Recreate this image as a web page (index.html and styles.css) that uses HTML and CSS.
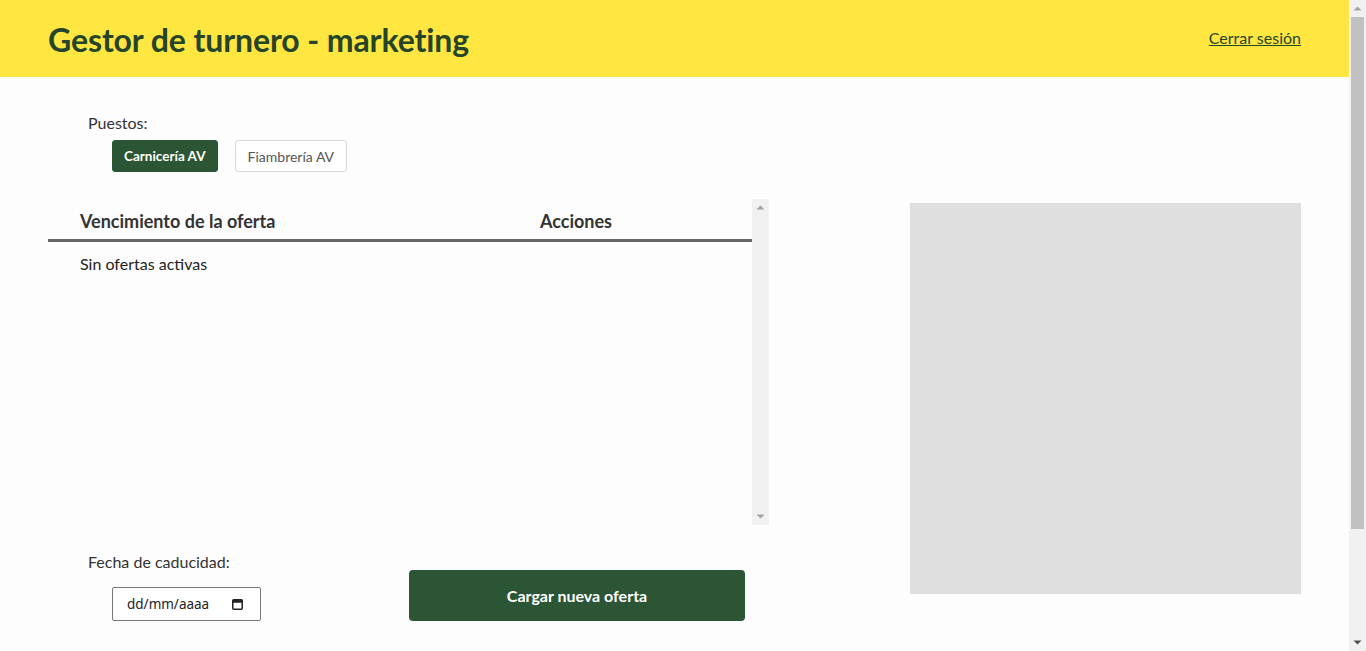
FILE: index.html
```html
<!DOCTYPE html>
<html lang="es">
<head>
<meta charset="utf-8">
<title>Gestor de turnero - marketing</title>
<link rel="stylesheet" href="styles.css">
</head>
<body>
<div class="page">
  <header class="topbar">
    <h1 class="title">Gestor de turnero - marketing</h1>
    <a class="logout" href="#">Cerrar sesión</a>
  </header>
  <main class="content">
    <section class="left">
      <div class="puestos">
        <div class="label">Puestos:</div>
        <div class="puesto-buttons">
          <button class="btn-puesto active">Carnicería AV</button>
          <button class="btn-puesto">Fiambrería AV</button>
        </div>
      </div>
      <div class="table-wrap">
        <div class="table-scroll">
          <table class="offers">
            <thead>
              <tr><th class="col-venc">Vencimiento de la oferta</th><th class="col-acc">Acciones</th></tr>
            </thead>
            <tbody>
              <tr><td class="empty" colspan="2">Sin ofertas activas</td></tr>
            </tbody>
          </table>
        </div>
        <div class="sbar" aria-hidden="true">
          <div class="sbar-btn">
            <svg width="17" height="17" viewBox="0 0 17 17"><path d="M4.5 10.5h8L8.5 6.5z" fill="#a3a3a3"/></svg>
          </div>
          <div class="sbar-track"></div>
          <div class="sbar-btn">
            <svg width="17" height="17" viewBox="0 0 17 17"><path d="M4.5 6.5h8L8.5 10.5z" fill="#a3a3a3"/></svg>
          </div>
        </div>
      </div>
      <div class="form-row">
        <div class="date-field">
          <div class="label">Fecha de caducidad:</div>
          <label class="date-box">
            <input class="date-input" type="text" placeholder="dd/mm/aaaa">
            <svg class="cal-icon" width="11" height="12" viewBox="0 0 11 12" aria-hidden="true">
              <rect x="0.75" y="1.75" width="9.5" height="9.5" rx="1" fill="none" stroke="#222" stroke-width="1.5"/>
              <rect x="0.75" y="1.75" width="9.5" height="3" fill="#222"/>
            </svg>
          </label>
        </div>
        <button class="btn-cargar">Cargar nueva oferta</button>
      </div>
    </section>
    <aside class="preview"></aside>
  </main>
</div>
<div class="page-sbar" aria-hidden="true">
  <div class="sbar-btn">
    <svg width="17" height="17" viewBox="0 0 17 17"><path d="M4.5 10.5h8L8.5 6.5z" fill="#a3a3a3"/></svg>
  </div>
  <div class="sbar-track">
    <div class="sbar-thumb"></div>
  </div>
  <div class="sbar-btn">
    <svg width="17" height="17" viewBox="0 0 17 17"><path d="M4.5 6.5h8L8.5 10.5z" fill="#505050"/></svg>
  </div>
</div>
</body>
</html>
```
FILE: styles.css
```css
html, body {
  margin: 0;
  padding: 0;
}
body {
  background: #fdfdfd;
  font-family: Lato, "Open Sans", sans-serif;
  color: #222;
}
.page {
  margin-right: 17px;
}

/* fake classic scrollbars */
.page-sbar {
  position: fixed;
  top: 0;
  right: 0;
  width: 17px;
  height: 100vh;
  background: #f1f1f1;
  display: flex;
  flex-direction: column;
}
.sbar-btn {
  height: 17px;
  flex: none;
  display: flex;
}
.sbar-track {
  flex: 1;
  display: flex;
  flex-direction: column;
}
.sbar-thumb {
  height: 512px;
  margin: 0 2px;
  background: #c1c1c1;
}
.sbar {
  width: 17px;
  flex: none;
  background: #f1f1f1;
  display: flex;
  flex-direction: column;
}

.topbar {
  height: 77px;
  background: #ffe640;
  display: flex;
  align-items: center;
  justify-content: space-between;
  padding: 0 48px;
  box-sizing: border-box;
}
.title {
  margin: 0;
  font-size: 32px;
  font-weight: 700;
  color: #25442a;
  letter-spacing: -0.1px;
  padding-top: 2px;
}
.logout {
  color: #25442a;
  font-size: 16px;
  text-decoration: underline;
  margin-top: -3px;
}
.content {
  display: flex;
  justify-content: space-between;
  padding: 0 48px 163px;
}
.left {
  width: 721px;
}
.puestos {
  padding-top: 36px;
}
.label {
  font-size: 16px;
  line-height: 20px;
  color: #333;
  padding-left: 40px;
}
.puesto-buttons {
  display: flex;
  gap: 17px;
  padding-left: 64px;
  margin-top: 7px;
}
.btn-puesto {
  height: 32px;
  padding: 0 12px;
  font-family: Lato, sans-serif;
  font-size: 14px;
  border-radius: 3px;
  background: #fff;
  color: #555;
  border: 1px solid #d8d8d8;
}
.btn-puesto.active {
  background: #2b5535;
  color: #fff;
  border-color: #2b5535;
  font-weight: 700;
  padding: 0 11px;
  font-size: 13.5px;
}
.table-wrap {
  margin-top: 27px;
  height: 326px;
  display: flex;
}
.table-scroll {
  flex: 1;
  overflow-y: auto;
}
.offers {
  width: 100%;
  border-collapse: collapse;
}
.offers th {
  font-size: 18px;
  font-weight: 700;
  color: #333;
  height: 36px;
  padding: 4px 0 0;
  border-bottom: 3px solid #666;
  width: 50%;
}
.col-venc {
  text-align: left;
  padding-left: 32px !important;
}
.col-acc {
  text-align: center;
}
.empty {
  font-size: 16px;
  padding: 12px 0 0 32px;
  color: #222;
}
.form-row {
  display: flex;
  align-items: flex-start;
  margin-top: 27px;
}
.date-field {
  width: 361px;
}
.date-box {
  margin: 15px 0 0 64px;
  width: 149px;
  height: 34px;
  box-sizing: border-box;
  border: 1px solid #767676;
  border-radius: 2px;
  background: #fff;
  display: flex;
  align-items: center;
  padding: 0 17px 0 14px;
}
.date-input {
  flex: 1;
  min-width: 0;
  border: none;
  outline: none;
  padding: 0;
  background: transparent;
  font-family: "Noto Sans", "Liberation Sans", sans-serif;
  font-size: 13.5px;
  color: #222;
}
.date-input::placeholder {
  color: #222;
  opacity: 1;
}
.cal-icon {
  flex: none;
}
.btn-cargar {
  margin-top: 18px;
  width: 336px;
  height: 51px;
  border: none;
  border-radius: 4px;
  background: #2b5535;
  color: #fff;
  font-family: Lato, sans-serif;
  font-size: 16px;
  font-weight: 700;
}
.preview {
  margin-top: 126px;
  width: 391px;
  height: 391px;
  background: #dfdfdf;
}
```
